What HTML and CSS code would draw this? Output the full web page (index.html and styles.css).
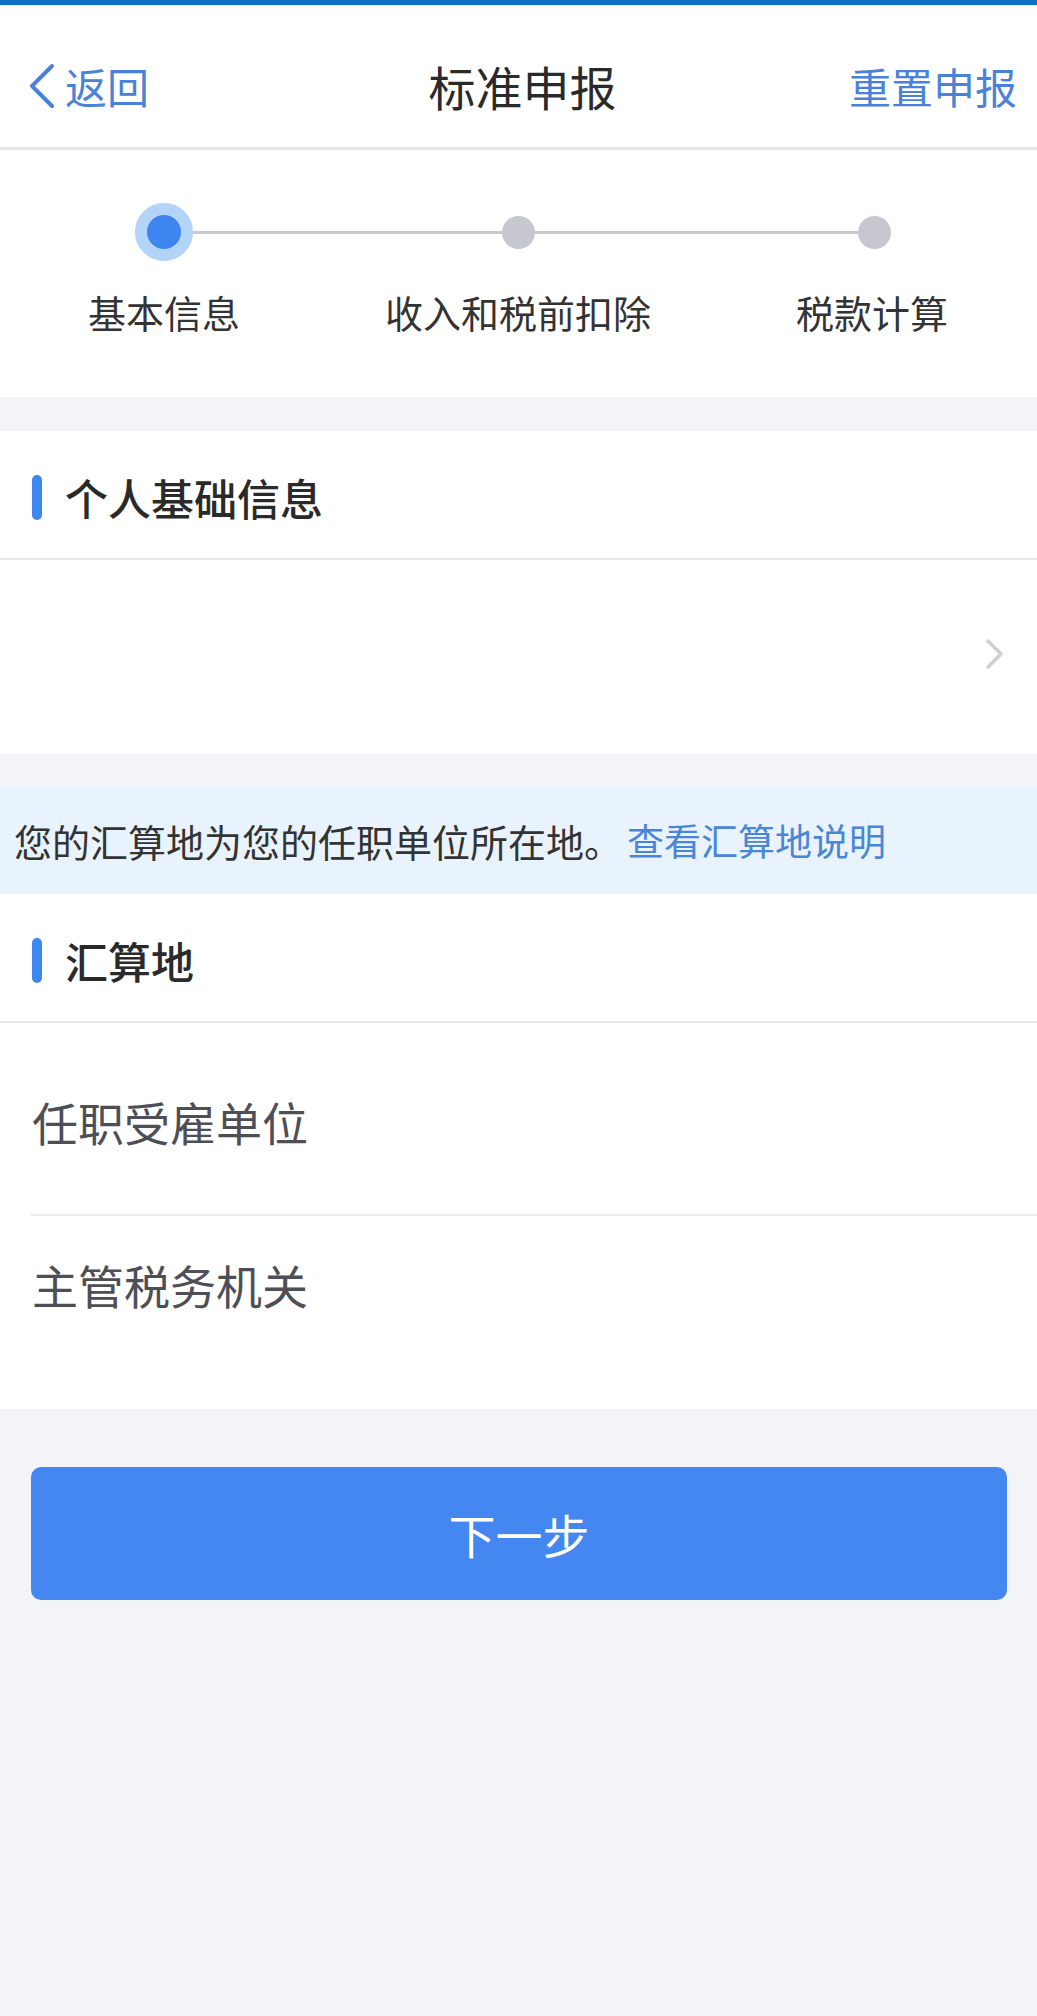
FILE: index.html
```html
<!DOCTYPE html>
<html lang="zh-CN">
<head>
<meta charset="utf-8">
<title>标准申报</title>
<link rel="stylesheet" href="styles.css">
</head>
<body>
<div class="page">
  <div class="statusbar"></div>
  <header class="navbar">
    <div class="nav-left">
      <svg class="back-icon" width="28" height="46" viewBox="0 0 28 46"><path d="M24 3 L4 23 L24 43" fill="none" stroke="#4a82d9" stroke-width="4" stroke-linecap="round" stroke-linejoin="round"/></svg>
      <span class="nav-link">返回</span>
    </div>
    <div class="nav-title">标准申报</div>
    <div class="nav-right"><span class="nav-link">重置申报</span></div>
  </header>

  <section class="stepper">
    <div class="dots">
      <span class="dot dot-active"></span>
      <span class="connector connector-1"></span>
      <span class="dot"></span>
      <span class="connector connector-2"></span>
      <span class="dot"></span>
    </div>
    <div class="labels">
      <span class="step-label">基本信息</span>
      <span class="step-label">收入和税前扣除</span>
      <span class="step-label">税款计算</span>
    </div>
  </section>

  <section class="card">
    <div class="card-header"><span class="bar"></span><span class="card-title">个人基础信息</span></div>
    <div class="info-row">
      <svg class="arrow" width="20" height="32" viewBox="0 0 20 32"><path d="M3 3 L16 16 L3 29" fill="none" stroke="#cfd0d4" stroke-width="3.5" stroke-linecap="round" stroke-linejoin="round"/></svg>
    </div>
  </section>

  <div class="notice">您的汇算地为您的任职单位所在地。<span class="notice-link">查看汇算地说明</span></div>

  <section class="card card-plain">
    <div class="card-header"><span class="bar"></span><span class="card-title">汇算地</span></div>
    <div class="field field-first"><span class="field-label">任职受雇单位</span></div>
    <div class="field field-second"><span class="field-label">主管税务机关</span></div>
  </section>

  <div class="actions">
    <button class="primary-btn">下一步</button>
  </div>
</div>
</body>
</html>
```

FILE: styles.css
```css
* { box-sizing: border-box; }
html, body { margin: 0; padding: 0; }
body {
  background: #f3f4f8;
  font-family: "Noto Sans CJK SC", "Noto Sans", sans-serif;
  color: #333;
  width: 1037px;
  min-height: 2016px;
}
.statusbar { height: 5px; background: #0a6fc2; }

.navbar {
  height: 145px;
  padding: 19px 20px 0 28px;
  display: grid;
  grid-template-columns: 1fr auto 1fr;
  align-items: center;
  background: #fff;
  border-bottom: 3px solid #e7e7e9;
}
.nav-left { display: flex; align-items: center; gap: 9px; }
.back-icon { display: block; }
.nav-link { color: #4a82d9; font-size: 42px; line-height: 1; }
.nav-title { font-size: 47px; color: #2a2a2a; line-height: 1; }
.nav-right { display: flex; justify-content: flex-end; }

.stepper {
  background: #fff;
  height: 247px;
  padding-top: 53px;
}
.dots { display: flex; align-items: center; padding-left: 135px; height: 58px; }
.dot {
  width: 33px; height: 33px; border-radius: 50%;
  background: #c6c7cf; flex: none;
}
.dot-active {
  width: 58px; height: 58px;
  background: #3f85f0;
  border: 12px solid #b4d3f8;
}
.connector { height: 3px; background: #c9c9ce; flex: none; }
.connector-1 { width: 309px; }
.connector-2 { width: 323px; }
.labels {
  display: flex;
  justify-content: space-between;
  padding: 0 89px 0 88px;
  margin-top: 25px;
}
.step-label { font-size: 38px; line-height: 52px; color: #333; }

.card { background: #fff; margin-top: 34px; }
.card-header {
  height: 129px;
  padding: 5px 0 0 32px;
  display: flex;
  align-items: center;
  border-bottom: 2px solid #e8e8ea;
}
.bar {
  width: 10px; height: 45px; border-radius: 5px;
  background: #3e86f0; flex: none;
}
.card-title { margin-left: 23px; font-size: 43px; font-weight: 500; color: #2a2a2a; line-height: 1; }

.info-row {
  height: 194px;
  display: flex;
  align-items: center;
  justify-content: flex-end;
  padding: 0 32px 6px 0;
}
.arrow { display: block; }

.notice {
  margin-top: 32px;
  height: 108px;
  background: #e9f3fe;
  display: flex;
  align-items: center;
  padding-left: 14px;
  font-size: 38px;
  color: #333;
  white-space: nowrap;
}
.notice-link { color: #4a86d8; margin-left: 5px; font-size: 37px; }

.card-plain { margin-top: 0; }
.field {
  margin-left: 31px;
  height: 193px;
}
.field-first { padding-top: 70px; border-bottom: 2px solid #ececee; }
.field-second { padding-top: 40px; }
.field-label {
  display: block;
  font-size: 46px;
  line-height: 56px;
  color: #4e4e56;
  margin-left: 1px;
}

.actions { padding: 58px 30px 0 31px; }
.primary-btn {
  display: block;
  width: 100%;
  height: 133px;
  border: none;
  border-radius: 10px;
  background: #4487f1;
  color: #fff;
  font-family: "Noto Sans CJK SC", "Noto Sans", sans-serif;
  font-size: 47px;
  font-weight: 400;
}
```
